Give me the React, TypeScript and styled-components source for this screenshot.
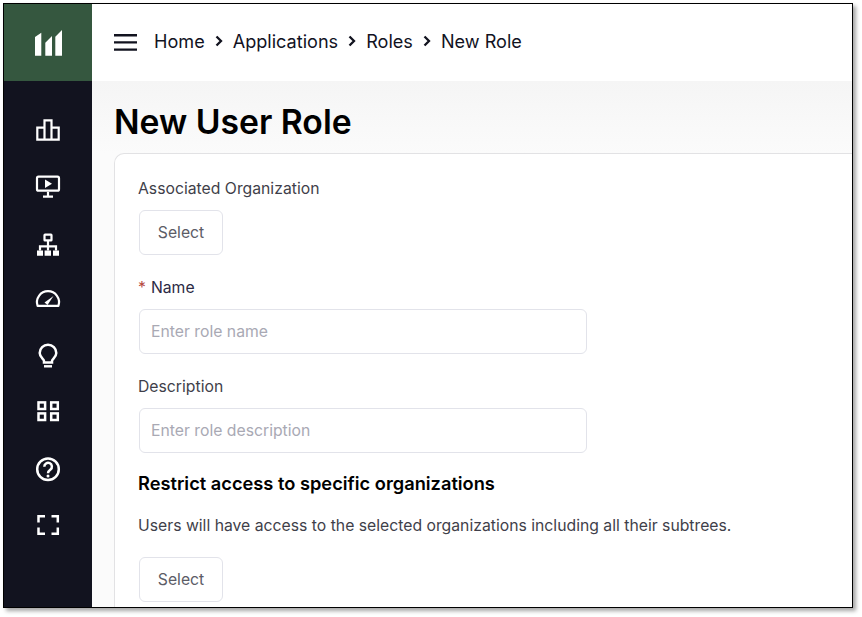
import React from "react";
import styled, { createGlobalStyle } from "styled-components";

const GlobalStyle = createGlobalStyle`
  html, body {
    margin: 0;
    padding: 0;
    background: #fff;
    font-family: Inter, "Liberation Sans", sans-serif;
  }
`;

const Page = styled.div`
  width: 862px;
  height: 617px;
  padding: 3px 0 0 3px;
  box-sizing: border-box;
  overflow: hidden;
`;

const Window = styled.div`
  width: 850px;
  height: 605px;
  box-sizing: border-box;
  border: 1px solid #000;
  box-shadow: 3px 3px 4px rgba(0, 0, 0, 0.35);
  display: flex;
  overflow: hidden;
  background: #fff;
`;

const Sidebar = styled.aside`
  width: 88px;
  flex: none;
  background: #12131f;
  display: flex;
  flex-direction: column;
`;

const LogoBox = styled.div`
  height: 77px;
  flex: none;
  background: #35573f;
  display: flex;
  align-items: center;
  justify-content: center;
`;

const NavList = styled.nav`
  display: flex;
  flex-direction: column;
  align-items: center;
  padding-top: 35px;
  gap: 28.3px;
`;

const NavIcon = styled.svg`
  width: 28px;
  height: 28px;
  display: block;
  fill: none;
  stroke: #fff;
  stroke-width: 2.2;
`;

const Main = styled.div`
  flex: 1;
  min-width: 0;
  display: flex;
  flex-direction: column;
`;

const Header = styled.header`
  height: 77px;
  flex: none;
  display: flex;
  align-items: center;
  padding-left: 22px;
  gap: 17px;
  background: #fff;
`;

const Breadcrumbs = styled.div`
  display: flex;
  align-items: center;
  gap: 9px;
  padding-bottom: 4px;
  font-size: 18.1px;
  color: #12131f;
`;

const Content = styled.main`
  flex: 1;
  min-height: 0;
  background: linear-gradient(#f5f5f5, #fbfbfb 72px);
  padding: 0 0 0 22px;
`;

const Title = styled.h1`
  margin: 0;
  padding-top: 19px;
  height: 53px;
  font-size: 33.7px;
  line-height: 44px;
  font-weight: 600;
  color: #000;
`;

const Card = styled.section`
  background: #fff;
  border: 1px solid #e2e2e4;
  border-right: 0;
  border-radius: 10px 0 0 0;
  padding: 23px 23px 0;
  height: 500px;
  box-sizing: border-box;
`;

const Label = styled.div`
  padding-top: 1px;
  font-size: 15.75px;
  line-height: 22px;
  color: #3f3f4a;
  margin-bottom: 10px;
`;

const RequiredLabel = styled(Label)`
  color: #2b2a45;
`;

const Star = styled.span`
  color: #b5473c;
  margin-right: 5px;
`;

const SelectButton = styled.button`
  display: block;
  width: 84px;
  height: 45px;
  margin-left: 1px;
  padding: 0;
  background: #fff;
  border: 1px solid #e2e3ea;
  border-radius: 6px;
  font: inherit;
  font-size: 15.75px;
  color: #5c5c66;
`;

const Field = styled.div`
  margin-bottom: 21px;
`;

const TextInput = styled.input`
  display: block;
  width: 448px;
  height: 45px;
  margin-left: 1px;
  box-sizing: border-box;
  padding: 0 11px;
  background: #fff;
  border: 1px solid #e2e3ea;
  border-radius: 6px;
  font: inherit;
  font-size: 15.75px;
  &::placeholder {
    color: #a9a9b4;
    opacity: 1;
  }
`;

const SectionTitle = styled.h2`
  margin: -3px 0 19px;
  font-size: 18.25px;
  line-height: 24px;
  font-weight: 600;
  color: #000;
`;

const HelpText = styled.p`
  margin: 0 0 19px;
  font-size: 15.75px;
  line-height: 24px;
  color: #3f3f4a;
`;

const Chevron = () => (
  <svg width="10" height="12" viewBox="0 0 10 12" fill="none" stroke="#12131f" strokeWidth="2.3">
    <path d="M2.5 1.500 7 6l-4.500 4.500" />
  </svg>
);

const Logo = () => (
  <svg width="27" height="26" viewBox="0 0 27 26" fill="#fff">
    <path d="M0 7 6.300 2.700V25.700H0zM10.300 12.700 17 6V25.700H10.300zM20.300 6.700 27 0V25.700H20.300z" />
  </svg>
);

const Menu = () => (
  <svg width="23" height="18" viewBox="0 0 23 18" stroke="#12131f" strokeWidth="2.4">
    <path d="M0 1.200h23M0 8.400h23M0 15.600h23" />
  </svg>
);

const icons: React.ReactNode[] = [
  <path d="M3.300 23.700H24.700V11.700H17.500V4.300H10.500V11.700H3.300zM10.500 11.700V23.700M17.500 11.700V23.700" />,
  <>
    <rect x="3" y="4.700" width="22" height="14" rx="1.500" />
    <path d="M14 19.700v4.500M9 24.700h10" />
    <path d="M11 7.500l7 4.200-7 4.300z" fill="#fff" stroke="none" />
  </>,
  <>
    <rect x="10.500" y="5.700" width="7" height="5.700" rx="0.500" />
    <path d="M14 11.400v10M6 21.400v-4h16v4" />
    <path d="M3 21.400h6v5.300H3zM10.600 21.400H17v5.300h-6.400zM19 21.400h6v5.300h-6z" fill="#fff" stroke="none" />
  </>,
  <>
    <path d="M3.600 20.800A11 11 0 1 1 24.400 20.800z" strokeLinejoin="round" />
    <path d="M10.500 17.500 19.500 11 13.500 20z" fill="#fff" stroke="none" />
  </>,
  <>
    <path
      d="M10 21.500V20C10 18 5.700 16.500 5.700 12a8.300 8.300 0 0 1 16.600 0C22.300 16.500 18 18 18 20v1.500z"
      strokeWidth="2.500"
    />
    <path d="M10 25.300h8" strokeWidth="2.400" />
  </>,
  <g strokeWidth="2.500">
    <rect x="4.500" y="5.400" width="6.600" height="6.600" />
    <rect x="17.200" y="5.400" width="6.600" height="6.600" />
    <rect x="4.500" y="16.400" width="6.600" height="6.600" />
    <rect x="17.200" y="16.400" width="6.600" height="6.600" />
  </g>,
  <>
    <circle cx="14" cy="15.200" r="10.800" strokeWidth="2.500" />
    <path d="M10.300 12.700a3.800 3.800 0 1 1 6.200 2.900c-1.500 1.100-2.500 1.700-2.500 3.600" strokeWidth="2.500" />
    <circle cx="14" cy="22" r="1.500" fill="#fff" stroke="none" />
  </>,
  <path d="M11 6.200H4.500V12.500M17.500 6.200H23.800V12.500M11 23.700H4.500V17.500M17.500 23.700H23.800V17.500" strokeWidth="2.500" />,
];

const crumbs = ["Home", "Applications", "Roles", "New Role"];

const App = () => (
  <Page>
    <GlobalStyle />
    <Window>
      <Sidebar>
        <LogoBox>
          <Logo />
        </LogoBox>
        <NavList>
          {icons.map((icon, i) => (
            <NavIcon key={i} viewBox="0 0 28 28">
              {icon}
            </NavIcon>
          ))}
        </NavList>
      </Sidebar>
      <Main>
        <Header>
          <Menu />
          <Breadcrumbs>
            {crumbs.map((crumb, i) => (
              <React.Fragment key={crumb}>
                {i > 0 && <Chevron />}
                <span>{crumb}</span>
              </React.Fragment>
            ))}
          </Breadcrumbs>
        </Header>
        <Content>
          <Title>New User Role</Title>
          <Card>
            <Field>
              <Label>Associated Organization</Label>
              <SelectButton>Select</SelectButton>
            </Field>
            <Field>
              <RequiredLabel>
                <Star>*</Star>Name
              </RequiredLabel>
              <TextInput placeholder="Enter role name" />
            </Field>
            <Field>
              <Label>Description</Label>
              <TextInput placeholder="Enter role description" />
            </Field>
            <SectionTitle>Restrict access to specific organizations</SectionTitle>
            <HelpText>Users will have access to the selected organizations including all their subtrees.</HelpText>
            <SelectButton>Select</SelectButton>
          </Card>
        </Content>
      </Main>
    </Window>
  </Page>
);

export default App;
